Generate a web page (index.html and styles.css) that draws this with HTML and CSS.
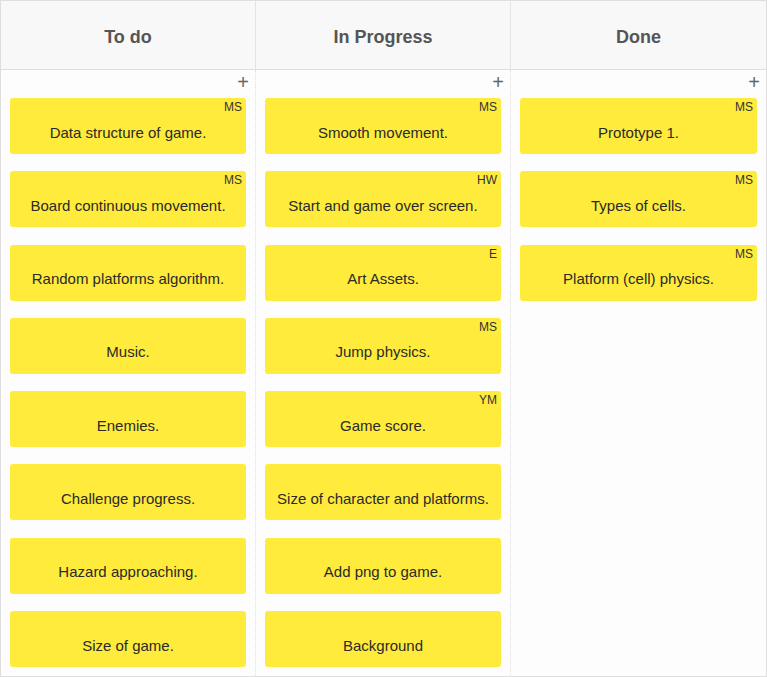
FILE: index.html
```html
<!DOCTYPE html>
<html>
<head>
<meta charset="utf-8">
<link rel="stylesheet" href="styles.css">
</head>
<body>
<div class="board">
  <div class="head">
    <div class="hcell">To do</div>
    <div class="hcell">In Progress</div>
    <div class="hcell last">Done</div>
  </div>
  <div class="body">
    <div class="col">
      <div class="add">+</div>
      <div class="card"><div class="tag">MS</div><div class="txt">Data structure of game.</div></div>
      <div class="card"><div class="tag">MS</div><div class="txt">Board continuous movement.</div></div>
      <div class="card"><div class="tag"></div><div class="txt">Random platforms algorithm.</div></div>
      <div class="card"><div class="tag"></div><div class="txt">Music.</div></div>
      <div class="card"><div class="tag"></div><div class="txt">Enemies.</div></div>
      <div class="card"><div class="tag"></div><div class="txt">Challenge progress.</div></div>
      <div class="card"><div class="tag"></div><div class="txt">Hazard approaching.</div></div>
      <div class="card"><div class="tag"></div><div class="txt">Size of game.</div></div>
    </div>
    <div class="col">
      <div class="add">+</div>
      <div class="card"><div class="tag">MS</div><div class="txt">Smooth movement.</div></div>
      <div class="card"><div class="tag">HW</div><div class="txt">Start and game over screen.</div></div>
      <div class="card"><div class="tag">E</div><div class="txt">Art Assets.</div></div>
      <div class="card"><div class="tag">MS</div><div class="txt">Jump physics.</div></div>
      <div class="card"><div class="tag">YM</div><div class="txt">Game score.</div></div>
      <div class="card"><div class="tag"></div><div class="txt">Size of character and platforms.</div></div>
      <div class="card"><div class="tag"></div><div class="txt">Add png to game.</div></div>
      <div class="card"><div class="tag"></div><div class="txt">Background</div></div>
    </div>
    <div class="col last">
      <div class="add">+</div>
      <div class="card"><div class="tag">MS</div><div class="txt">Prototype 1.</div></div>
      <div class="card"><div class="tag">MS</div><div class="txt">Types of cells.</div></div>
      <div class="card"><div class="tag">MS</div><div class="txt">Platform (cell) physics.</div></div>
    </div>
  </div>
</div>
</body>
</html>
```
FILE: styles.css
```css
html, body {
  margin: 0;
  padding: 0;
  background: #ffffff;
}
body {
  font-family: "Liberation Sans", Arial, sans-serif;
  color: #333;
}
.board {
  width: 767px;
  height: 677px;
  box-sizing: border-box;
  border: 1px solid #dedede;
  display: flex;
  flex-direction: column;
  overflow: hidden;
}
.head {
  flex: 0 0 auto;
  display: grid;
  grid-template-columns: 255px 255px 255px;
  height: 68px;
  border-bottom: 1px solid #dedede;
  background: #f8f8f8;
}
.hcell {
  border-right: 1px solid #e4e4e4;
  display: flex;
  align-items: center;
  justify-content: center;
  padding-top: 5px;
  box-sizing: border-box;
  font-weight: bold;
  font-size: 18px;
  color: #555;
}
.hcell.last {
  border-right: none;
}
.body {
  flex: 1 1 auto;
  min-height: 0;
  display: grid;
  grid-template-columns: 255px 255px 255px;
  background: #fdfdfd;
}
.col {
  border-right: 1px dotted #e0e0e0;
  padding: 0 9px;
  display: flex;
  flex-direction: column;
}
.col.last {
  border-right: none;
}
.add {
  flex: 0 0 auto;
  height: 28px;
  text-align: right;
  font-size: 20px;
  line-height: 24px;
  color: #666;
  margin-right: -3px;
}
.card {
  flex: 0 0 auto;
  background: #ffeb3b;
  border-radius: 3px;
  height: 56px;
  margin-bottom: 17.3px;
  padding: 0 4px;
  box-sizing: border-box;
  display: flex;
  flex-direction: column;
}
.tag {
  height: 17px;
  line-height: 18px;
  font-size: 12px;
  text-align: right;
  color: #333;
}
.txt {
  margin-top: 7.5px;
  line-height: 20px;
  font-size: 15px;
  text-align: center;
  color: #2a2a2a;
}
```
